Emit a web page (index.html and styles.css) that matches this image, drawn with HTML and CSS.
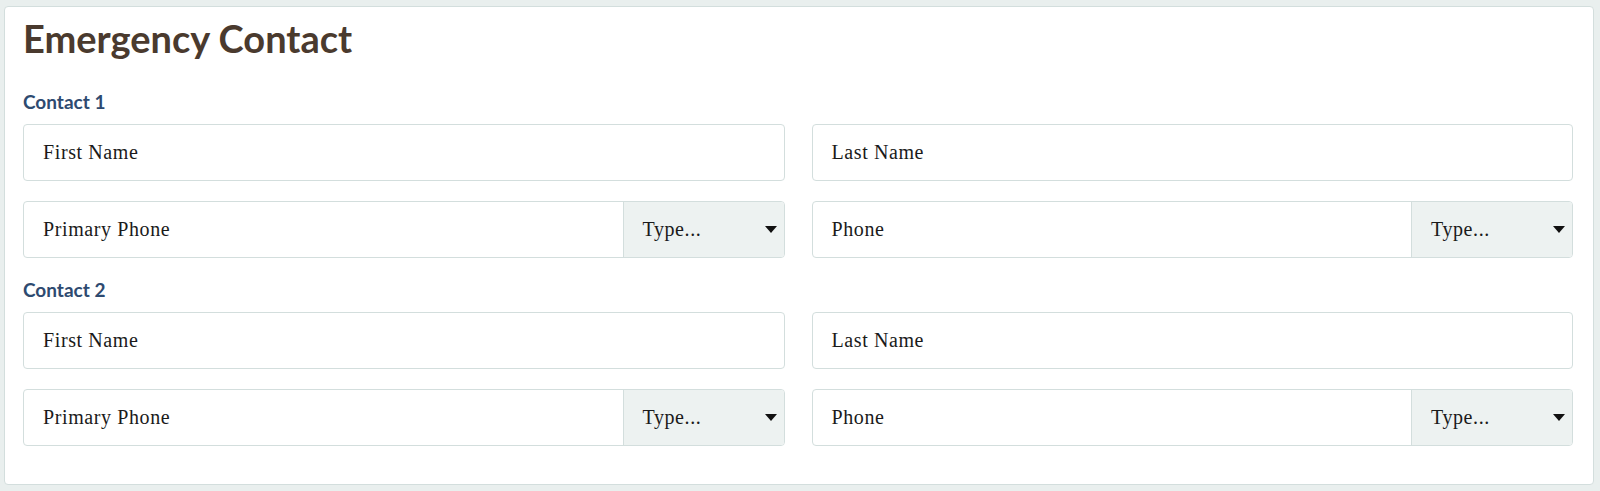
FILE: index.html
```html
<!DOCTYPE html>
<html lang="en">
<head>
<meta charset="utf-8">
<title>Emergency Contact</title>
<link rel="stylesheet" href="styles.css">
</head>
<body>
<section class="card">
  <h1 class="title">Emergency Contact</h1>

  <h2 class="group-label">Contact 1</h2>
  <div class="grid">
    <div class="field"><span class="field-text">First Name</span></div>
    <div class="field"><span class="field-text">Last Name</span></div>
    <div class="field split">
      <span class="field-text">Primary Phone</span>
      <span class="type-select">Type...<svg class="caret" viewBox="0 0 12 7"><path d="M0 0h12L6 7z"/></svg></span>
    </div>
    <div class="field split">
      <span class="field-text">Phone</span>
      <span class="type-select">Type...<svg class="caret" viewBox="0 0 12 7"><path d="M0 0h12L6 7z"/></svg></span>
    </div>
  </div>

  <h2 class="group-label">Contact 2</h2>
  <div class="grid">
    <div class="field"><span class="field-text">First Name</span></div>
    <div class="field"><span class="field-text">Last Name</span></div>
    <div class="field split">
      <span class="field-text">Primary Phone</span>
      <span class="type-select">Type...<svg class="caret" viewBox="0 0 12 7"><path d="M0 0h12L6 7z"/></svg></span>
    </div>
    <div class="field split">
      <span class="field-text">Phone</span>
      <span class="type-select">Type...<svg class="caret" viewBox="0 0 12 7"><path d="M0 0h12L6 7z"/></svg></span>
    </div>
  </div>
</section>
</body>
</html>
```

FILE: styles.css
```css
html, body {
  margin: 0;
  padding: 0;
}

body {
  background: #e9efee;
  font-family: Lato, "Liberation Sans", sans-serif;
  height: 491px;
  overflow: hidden;
}

.card {
  margin: 6px 6px 0 4px;
  background: #ffffff;
  border: 1px solid #d3dedd;
  border-radius: 4px;
  padding: 8px 20px 38px 18px;
}

.title {
  margin: 0;
  font-size: 38px;
  line-height: 46px;
  font-weight: 700;
  color: #4a3a2e;
}

.group-label {
  margin: 29px 0 10px;
  font-size: 19px;
  line-height: 24px;
  font-weight: 700;
  color: #2e4a70;
}

.grid + .group-label {
  margin-top: 20px;
}

.grid {
  display: grid;
  grid-template-columns: 1fr 1fr;
  column-gap: 27px;
  row-gap: 20px;
}

.field {
  height: 57px;
  box-sizing: border-box;
  border: 1px solid #d3dedd;
  border-radius: 4px;
  display: flex;
  align-items: center;
  overflow: hidden;
  font-family: "Liberation Serif", serif;
  font-size: 20px;
  letter-spacing: 0.6px;
  color: #1a1a1a;
}

.field-text {
  flex: 1;
  padding-left: 19px;
}

.type-select {
  width: 161px;
  align-self: stretch;
  box-sizing: border-box;
  border-left: 1px solid #d3dedd;
  background: #edf2f1;
  display: flex;
  align-items: center;
  justify-content: space-between;
  padding: 0 7px 0 19px;
}

.caret {
  width: 12px;
  height: 7px;
  fill: #111;
}
```
